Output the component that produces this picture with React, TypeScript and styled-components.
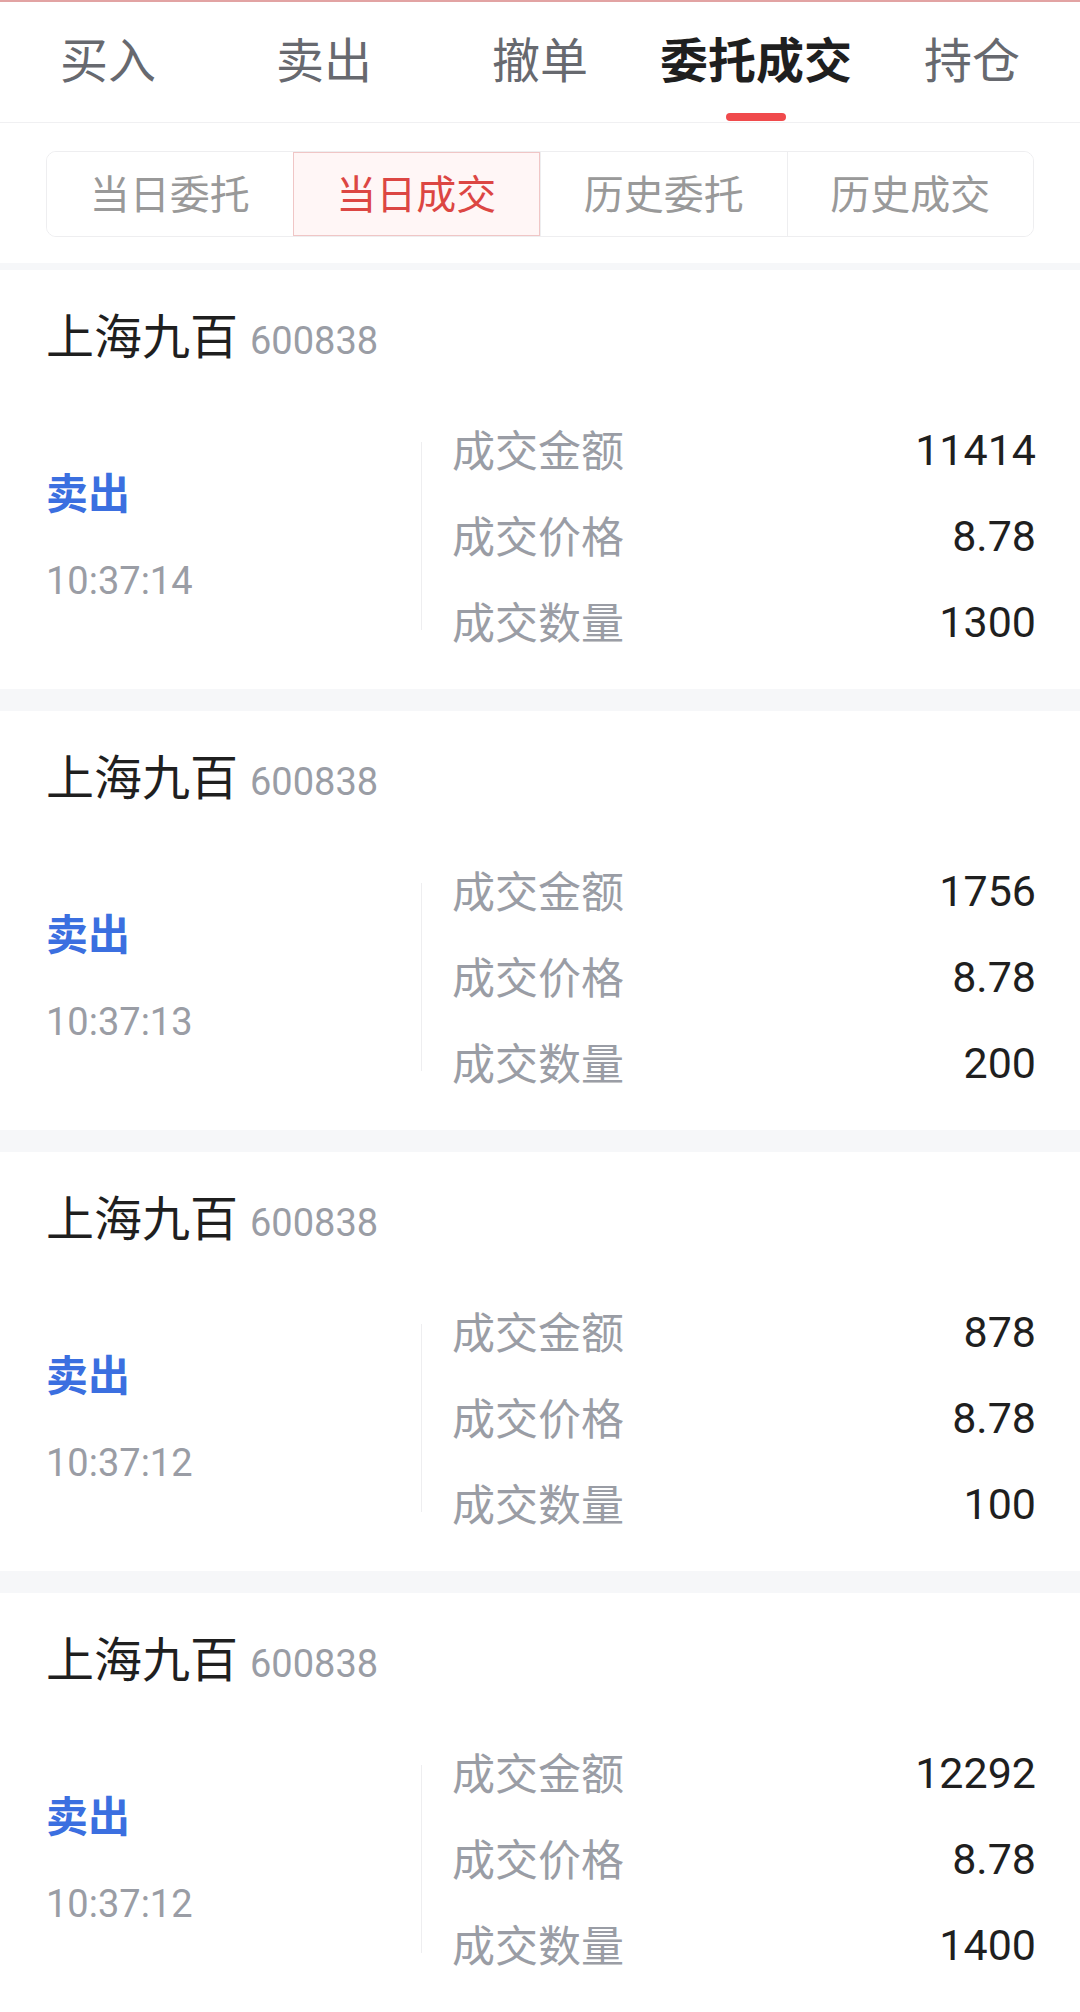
import styled, { createGlobalStyle } from 'styled-components';

const GlobalStyle = createGlobalStyle`
  html, body {
    margin: 0;
    padding: 0;
    background: #f6f7f9;
  }
  body {
    font-family: "Noto Sans CJK SC", "Noto Sans", sans-serif;
  }
`;

const Page = styled.div`
  width: 1080px;
  min-height: 2012px;
  background: #f6f7f9;
  border-top: 2px solid #e2a3a3;
  box-sizing: border-box;
`;

const TabBar = styled.div`
  display: flex;
  height: 120px;
  background: #fff;
  border-bottom: 1px solid #f0f0f2;
`;

const Tab = styled.div<{ $active?: boolean }>`
  position: relative;
  flex: 1;
  display: flex;
  align-items: center;
  justify-content: center;
  padding-bottom: 10px;
  font-size: 48px;
  font-weight: ${p => (p.$active ? 700 : 400)};
  color: ${p => (p.$active ? '#1f1f1f' : '#67696f')};

  &::after {
    content: '';
    display: ${p => (p.$active ? 'block' : 'none')};
    position: absolute;
    left: 50%;
    bottom: 1px;
    width: 60px;
    height: 8px;
    margin-left: -30px;
    border-radius: 4px;
    background: #f04a4c;
  }
`;

const SegmentWrap = styled.div`
  background: #fff;
  padding: 28px 46px 26px;
  margin-bottom: 7px;
`;

const Segment = styled.div`
  display: flex;
  height: 86px;
  border: 1px solid #eeeef0;
  border-radius: 10px;
  box-sizing: border-box;
  overflow: hidden;
`;

const SegItem = styled.div<{ $active?: boolean }>`
  flex: 1;
  display: flex;
  align-items: center;
  justify-content: center;
  padding-bottom: 4px;
  font-size: 40px;
  box-sizing: border-box;
  color: ${p => (p.$active ? '#dc4643' : '#999999')};
  background: ${p => (p.$active ? '#fff6f6' : '#fff')};
  border: ${p => (p.$active ? '1px solid #f0c6c6' : 'none')};
  border-left: 1px solid ${p => (p.$active ? '#f0c6c6' : '#eeeef0')};
  &:first-child {
    border-left: none;
  }
`;

const List = styled.div`
  display: flex;
  flex-direction: column;
  gap: 22px;
`;

const Card = styled.div`
  background: #fff;
  padding: 33px 44px 24px 46px;
`;

const TitleRow = styled.div`
  display: flex;
  align-items: baseline;
  height: 60px;
  line-height: 60px;
  margin-bottom: 44px;
`;

const StockName = styled.span`
  font-size: 48px;
  color: #1f1f1f;
`;

const StockCode = styled.span`
  margin-left: 12px;
  font-family: Roboto, "Noto Sans", sans-serif;
  font-size: 38px;
  color: #9a9da5;
`;

const Body = styled.div`
  display: flex;
  align-items: center;
`;

const Side = styled.div`
  width: 375px;
  display: flex;
  flex-direction: column;
`;

const Direction = styled.div`
  height: 86px;
  line-height: 86px;
  font-size: 42px;
  font-weight: 700;
  color: #3b6fe0;
`;

const Time = styled.div`
  height: 86px;
  line-height: 86px;
  padding-top: 4px;
  font-family: Roboto, "Noto Sans", sans-serif;
  font-size: 38px;
  color: #9a9da5;
`;

const Divider = styled.div`
  width: 1px;
  height: 188px;
  background: #eeeef0;
`;

const Details = styled.div`
  flex: 1;
  padding-left: 30px;
  display: flex;
  flex-direction: column;
`;

const DetailRow = styled.div`
  display: flex;
  justify-content: space-between;
  align-items: center;
  height: 86px;
`;

const Label = styled.span`
  margin-top: -5px;
  font-size: 43px;
  color: #9a9da5;
`;

const Value = styled.span`
  font-family: Roboto, "Noto Sans", sans-serif;
  font-size: 43px;
  color: #1f1f1f;
`;

const tabs = ['买入', '卖出', '撤单', '委托成交', '持仓'];
const segments = ['当日委托', '当日成交', '历史委托', '历史成交'];

const trades = [
  { time: '10:37:14', amount: '11414', price: '8.78', qty: '1300' },
  { time: '10:37:13', amount: '1756', price: '8.78', qty: '200' },
  { time: '10:37:12', amount: '878', price: '8.78', qty: '100' },
  { time: '10:37:12', amount: '12292', price: '8.78', qty: '1400' },
];

const App = () => {
  return (
    <Page>
      <GlobalStyle />
      <TabBar>
        {tabs.map(t => (
          <Tab key={t} $active={t === '委托成交'}>{t}</Tab>
        ))}
      </TabBar>
      <SegmentWrap>
        <Segment>
          {segments.map(s => (
            <SegItem key={s} $active={s === '当日成交'}>{s}</SegItem>
          ))}
        </Segment>
      </SegmentWrap>
      <List>
        {trades.map((t, i) => (
          <Card key={i}>
            <TitleRow>
              <StockName>上海九百</StockName>
              <StockCode>600838</StockCode>
            </TitleRow>
            <Body>
              <Side>
                <Direction>卖出</Direction>
                <Time>{t.time}</Time>
              </Side>
              <Divider />
              <Details>
                <DetailRow>
                  <Label>成交金额</Label>
                  <Value>{t.amount}</Value>
                </DetailRow>
                <DetailRow>
                  <Label>成交价格</Label>
                  <Value>{t.price}</Value>
                </DetailRow>
                <DetailRow>
                  <Label>成交数量</Label>
                  <Value>{t.qty}</Value>
                </DetailRow>
              </Details>
            </Body>
          </Card>
        ))}
      </List>
    </Page>
  );
};

export default App;
